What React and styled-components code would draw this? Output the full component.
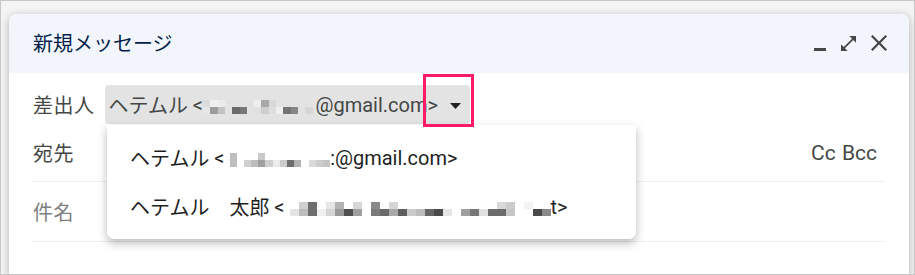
import React from "react";
import styled, { createGlobalStyle } from "styled-components";

const GlobalStyle = createGlobalStyle`
    html, body {
        margin: 0;
        padding: 0;
        background: #fff;
    }
    body {
        font-family: Roboto, "Noto Sans CJK JP", sans-serif;
    }
`;

const Frame = styled.div`
    width: 915px;
    height: 275px;
    box-sizing: border-box;
    border: 1px solid #c8c8c8;
    padding: 13px 5px 0 8px;
    overflow: hidden;
    background: #f4f4f4;
`;

const Card = styled.div`
    height: 100%;
    background: #fff;
    border-radius: 8px 8px 0 0;
    box-shadow: 0 2px 8px rgba(0, 0, 0, 0.28);
`;

const Header = styled.div`
    height: 59px;
    background: #f2f6fc;
    border-radius: 8px 8px 0 0;
    display: flex;
    align-items: center;
    justify-content: space-between;
    padding: 0 22px 0 24px;
`;

const Title = styled.div`
    font-size: 20px;
    color: #041e49;
    font-family: "Noto Sans CJK JP", sans-serif;
    padding-bottom: 2px;
`;

const Controls = styled.div`
    display: flex;
    align-items: flex-end;
    gap: 15px;
    padding-bottom: 2px;
    color: #444746;
`;

const Body = styled.div`
    position: relative;
    padding: 0 24px;
`;

const FromRow = styled.div`
    display: flex;
    align-items: center;
    gap: 10px;
    padding-top: 12px;
    height: 39px;
`;

const Label = styled.span`
    font-family: "Noto Sans CJK JP", sans-serif;
    font-size: 20px;
    letter-spacing: 0.5px;
    color: ${(p) => (p.$muted ? "#808080" : "#444746")};
`;

const Chip = styled.div`
    display: flex;
    align-items: center;
    height: 39px;
    width: 365px;
    box-sizing: border-box;
    padding: 0 0 0 4px;
    background: #e3e3e3;
    border-radius: 4px;
    font-size: 20px;
    color: #444746;
    white-space: nowrap;
`;

const Jp = styled.span`
    font-family: "Noto Sans CJK JP", sans-serif;
`;

const Latin = styled.span`
    font-family: Roboto, sans-serif;
`;

const Caret = styled.svg`
    margin-left: 12px;
    margin-top: 2px;
`;

const FieldRow = styled.div`
    display: flex;
    align-items: center;
    justify-content: space-between;
    height: ${(p) => p.$h}px;
    border-bottom: 1px solid #eceef1;
`;

const CcBcc = styled.span`
    font-family: Roboto, sans-serif;
    font-size: 21px;
    color: #444746;
    padding-right: 8px;
    word-spacing: 1px;
`;

const Menu = styled.div`
    position: absolute;
    left: 98px;
    top: 52px;
    width: 529px;
    height: 114px;
    background: #fff;
    border-radius: 0 0 7px 7px;
    box-shadow: 0 4px 10px rgba(0, 0, 0, 0.28);
    display: flex;
    flex-direction: column;
    padding-top: 8px;
    box-sizing: border-box;
`;

const MenuItem = styled.div`
    height: 49px;
    display: flex;
    align-items: center;
    padding-left: 23px;
    font-size: 20px;
    color: #1f1f1f;
    white-space: nowrap;
`;

const Highlight = styled.div`
    position: absolute;
    left: 414px;
    top: 1px;
    width: 51px;
    height: 53px;
    box-sizing: border-box;
    border: 3px solid #ff1a66;
`;

const BlurWrap = styled.span`
    display: inline-flex;
    align-items: flex-start;
    height: 18px;
    margin: ${(p) => p.$m || "0"};
`;

const BlurCol = styled.span`
    display: flex;
    flex-direction: column;
    width: ${(p) => p.$w}px;
    padding-top: 4px;
`;

const Cell = styled.span`
    display: block;
    height: 7px;
    background: ${(p) => p.$c || "transparent"};
`;

// pixelated (mosaic) part of the address
function Blur({ cols, w = 7, m }) {
    return (
        <BlurWrap $m={m}>
            {cols.map((c, i) => (
                <BlurCol key={i} $w={w}>
                    <Cell $c={c[0]} />
                    <Cell $c={c[1]} />
                </BlurCol>
            ))}
        </BlurWrap>
    );
}

const chipBlur = [
    ["#dcdcdc", "#e6e6e6"],
    ["#f0f0f0", "#9d9d9d"],
    ["#ececec", "#c2c2c2"],
    [null, null],
    ["#e3e3e3", "#6a6a6a"],
    ["#e3e3e3", "#787878"],
    [null, null],
    ["#efefef", "#e0e0e0"],
    ["#a8a8a8", "#cfcfcf"],
    ["#d9d9d9", "#dedede"],
    [null, "#efefef"],
    ["#e3e3e3", "#747474"],
    ["#e3e3e3", "#868686"],
    [null, null],
    ["#e3e3e3", "#d6d6d6"],
];

const item1Blur = [
    ["#bdbdbd", "#bdbdbd"],
    [null, null],
    [null, "#cfcfcf"],
    [null, "#bdbdbd"],
    ["#c9c9c9", "#a0a0a0"],
    [null, "#cfcfcf"],
    [null, "#ececec"],
    [null, "#cbcbcb"],
    [null, "#6e6e6e"],
    [null, "#b2b2b2"],
    [null, null],
    [null, "#dadada"],
    [null, "#cdcdcd"],
    [null, "#c4c4c4"],
];

const item2Blur = [
    [null, "#e4e4e4"],
    ["#cfcfcf", "#bdbdbd"],
    ["#6e6e6e", "#6e6e6e"],
    [null, "#f0f0f0"],
    ["#e6e6e6", "#d4d4d4"],
    ["#b3b3b3", "#9a9a9a"],
    [null, "#4f4f4f"],
    ["#d7d7d7", "#a0a0a0"],
    [null, null],
    ["#8a8a8a", "#7a7a7a"],
    [null, "#6a6a6a"],
    ["#d5d5d5", "#a9a9a9"],
    [null, "#5e5e5e"],
    [null, "#cbcbcb"],
    [null, "#bdbdbd"],
    [null, "#666666"],
    [null, "#4a4a4a"],
    [null, "#e6e6e6"],
    [null, null],
    [null, "#9f9f9f"],
    [null, "#777777"],
    [null, "#e0e0e0"],
    [null, "#6d6d6d"],
    ["#d8d8d8", "#6b6b6b"],
    ["#cccccc", "#c6c6c6"],
    [null, null],
    ["#f3f3f3", null],
    [null, "#4a4a4a"],
    [null, "#8a8a8a"],
];

function ComposeWindow() {
    return (
        <Card>
            <Header>
                <Title>新規メッセージ</Title>
                <Controls>
                    <svg width="12" height="3" viewBox="0 0 12 3">
                        <rect width="12" height="3" fill="currentColor" />
                    </svg>
                    <svg width="15" height="15" viewBox="3 3 18 18">
                        <path
                            d="M21 11V3h-8l3.29 3.29-10 10L3 13v8h8l-3.29-3.29 10-10z"
                            fill="currentColor"
                        />
                    </svg>
                    <svg width="16" height="16" viewBox="5 5 14 14">
                        <path
                            d="M19 6.41L17.59 5 12 10.59 6.41 5 5 6.41 10.59 12 5 17.59 6.41 19 12 13.41 17.59 19 19 17.59 13.41 12z"
                            fill="currentColor"
                        />
                    </svg>
                </Controls>
            </Header>
            <Body>
                <FromRow>
                    <Label>差出人</Label>
                    <Chip>
                        <Jp>ヘテムル</Jp>
                        <Latin>&nbsp;&lt;</Latin>
                        <Blur cols={chipBlur} w={7.3} m="0 3px 0 0" />
                        <Latin>@gmail.com&gt;</Latin>
                        <Caret width="11" height="6" viewBox="0 0 11 6">
                            <path d="M0 0h11L5.5 6z" fill="#222" />
                        </Caret>
                    </Chip>
                </FromRow>
                <FieldRow $h={57}>
                    <Label>宛先</Label>
                    <CcBcc>Cc Bcc</CcBcc>
                </FieldRow>
                <FieldRow $h={59}>
                    <Label $muted>件名</Label>
                </FieldRow>

                <Menu>
                    <MenuItem>
                        <Jp>ヘテムル</Jp>
                        <Latin>&nbsp;&lt;</Latin>
                        <Blur cols={item1Blur} w={7.2} m="0 0 0 5px" />
                        <Latin>:@gmail.com&gt;</Latin>
                    </MenuItem>
                    <MenuItem>
                        <Jp>ヘテムル　太郎</Jp>
                        <Latin>&nbsp;&lt;</Latin>
                        <Blur cols={item2Blur} w={9} m="0 0 0 5px" />
                        <Latin>t&gt;</Latin>
                    </MenuItem>
                </Menu>
                <Highlight />
            </Body>
        </Card>
    );
}

export default function App() {
    return (
        <>
            <GlobalStyle />
            <Frame>
                <ComposeWindow />
            </Frame>
        </>
    );
}
